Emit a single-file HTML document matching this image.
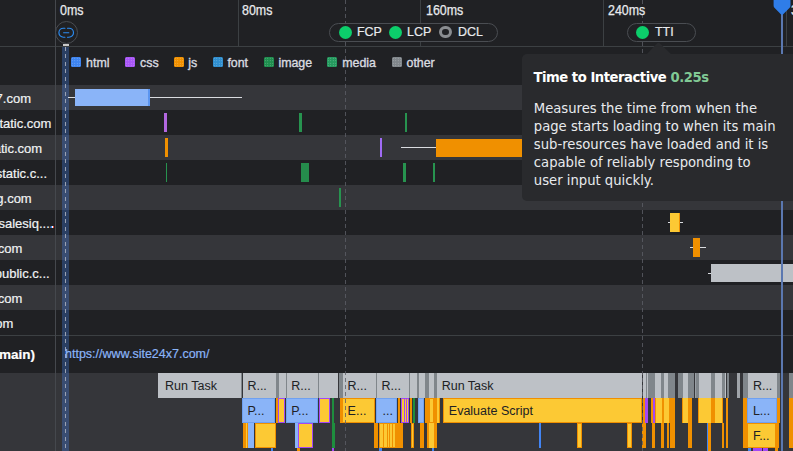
<!DOCTYPE html>
<html><head><meta charset="utf-8"><title>Waterfall</title>
<style>
html,body{margin:0;padding:0;background:#202124;}
body{width:793px;height:451px;position:relative;overflow:hidden;font-family:"Liberation Sans",sans-serif;font-size:12.5px;color:#e8eaed;}
.r{position:absolute;box-sizing:border-box;}
.t{position:absolute;white-space:nowrap;line-height:14px;z-index:4;}
.z3{z-index:3;}.z5{z-index:5;}
.lab{position:absolute;white-space:nowrap;line-height:14px;color:#f1f3f4;font-size:13px;-webkit-text-stroke:.2px currentColor;}
.ft{position:absolute;white-space:nowrap;line-height:14px;color:#202124;font-size:12.5px;}
.tall{font-size:13.8px;transform:scaleX(.9);transform-origin:0 0;line-height:16px;-webkit-text-stroke:.25px currentColor;}
.pl{font-size:13.4px;transform:scaleX(.93);transform-origin:0 0;line-height:16px;-webkit-text-stroke:.2px currentColor;}
.tip{font-family:"DejaVu Sans","Liberation Sans",sans-serif;}
</style></head><body>

<div class="r" style="left:0px;top:85px;width:793px;height:25px;background:#35363a;"></div>
<div class="r" style="left:0px;top:135px;width:793px;height:25px;background:#35363a;"></div>
<div class="r" style="left:0px;top:185px;width:793px;height:25px;background:#35363a;"></div>
<div class="r" style="left:0px;top:235px;width:793px;height:25px;background:#35363a;"></div>
<div class="r" style="left:0px;top:285px;width:793px;height:25px;background:#35363a;"></div>
<div class="r" style="left:0px;top:372.5px;width:793px;height:78.5px;background:#35363a;"></div>
<div class="r" style="left:0px;top:46px;width:793px;height:1px;background:#3c4043;"></div>
<div class="r" style="left:0px;top:335px;width:793px;height:1px;background:#3c4043;"></div>
<div class="r" style="left:238px;top:0px;width:1px;height:46px;background:#3c4043;"></div>
<div class="r" style="left:420px;top:0px;width:1px;height:46px;background:#3c4043;"></div>
<div class="r" style="left:603px;top:0px;width:1px;height:46px;background:#3c4043;"></div>
<div class="r" style="left:786px;top:0px;width:1px;height:46px;background:#3c4043;"></div>
<div class="r" style="left:55px;top:0px;width:1px;height:451px;background:#45484d;"></div>
<div class="t tall" style="left:60.2px;top:2.6px;color:#e8eaed">0ms</div>
<div class="t tall" style="left:242.4px;top:2.6px;color:#e8eaed">80ms</div>
<div class="t tall" style="left:425.7px;top:2.6px;color:#e8eaed">160ms</div>
<div class="t tall" style="left:607.6px;top:2.6px;color:#e8eaed">240ms</div>
<div class="t tall" style="left:791.3px;top:2.6px;color:#e8eaed">320ms</div>
<div class="r" style="left:344.5px;top:0;width:1px;height:451px;z-index:2;background:repeating-linear-gradient(to bottom,rgba(92,94,102,.8) 0,rgba(92,94,102,.8) 4px,transparent 4px,transparent 7px);"></div>
<div class="r" style="left:642px;top:0;width:1px;height:451px;z-index:2;background:repeating-linear-gradient(to bottom,rgba(92,94,102,.8) 0,rgba(92,94,102,.8) 4px,transparent 4px,transparent 7px);"></div>
<div class="r" style="left:62.2px;top:47px;width:6.7px;height:404px;background:rgba(66,133,244,.3);"></div>
<div class="r" style="left:65px;top:47px;width:1px;height:404px;background:repeating-linear-gradient(to bottom,#9aa1b1 0,#9aa1b1 4px,transparent 4px,transparent 7.5px);"></div>
<div class="r" style="left:62.5px;top:44px;width:6px;height:2px;background:#c8c8c8;"></div>
<div class="r" style="left:55px;top:20.5px;width:23px;height:23px;border-radius:50%;border:1px solid #4a4d52;background:#202124"></div>
<svg class="r" style="left:58px;top:26px" width="17" height="13" viewBox="58 26 17 13"><path d="M64.9 28.2H63.4a4.5 4.5 0 0 0 0 9h1.5M67.5 28.2h1.5a4.5 4.5 0 0 1 0 9h-1.5M63.6 32.7h5.2" fill="none" stroke="#2b8cf2" stroke-width="1.15" stroke-linecap="round"/></svg>
<div class="r z3" style="left:329px;top:22.5px;width:169px;height:19px;border-radius:10px;border:1px solid #4a4d52;background:#202124"></div>
<div class="r z3" style="left:626.5px;top:22.5px;width:69.5px;height:19px;border-radius:10px;border:1px solid #4a4d52;background:#202124"></div>
<div class="r z3" style="left:338.5px;top:25.700000000000003px;width:13px;height:13px;border-radius:50%;background:#0cce6b"></div>
<div class="r z3" style="left:388.5px;top:25.700000000000003px;width:13px;height:13px;border-radius:50%;background:#0cce6b"></div>
<div class="r z3" style="left:635.9px;top:25.700000000000003px;width:13px;height:13px;border-radius:50%;background:#0cce6b"></div>
<div class="r z3" style="left:439.1px;top:25.9px;width:12.6px;height:12.6px;border-radius:50%;border:3.1px solid #8a8d91;background:#202124"></div>
<div class="t pl" style="left:357.4px;top:24.2px;color:#e8eaed">FCP</div>
<div class="t pl" style="left:407.1px;top:24.2px;color:#e8eaed">LCP</div>
<div class="t pl" style="left:457.5px;top:24.2px;color:#e8eaed">DCL</div>
<div class="t pl" style="left:655.2px;top:24.2px;color:#e8eaed">TTI</div>
<div class="r" style="left:71.3px;top:57.4px;width:10px;height:10px;background:#3d84f0;border-radius:1.5px;background-image:radial-gradient(rgba(255,255,255,.35) .5px,transparent .7px);background-size:2.5px 2.5px;"></div>
<div class="t" style="left:86.1px;top:55.5px;color:#dadce0;font-size:12.4px;-webkit-text-stroke:.35px currentColor">html</div>
<div class="r" style="left:125.3px;top:57.4px;width:10px;height:10px;background:#a855f7;border-radius:1.5px;background-image:radial-gradient(rgba(255,255,255,.35) .5px,transparent .7px);background-size:2.5px 2.5px;"></div>
<div class="t" style="left:140.1px;top:55.5px;color:#dadce0;font-size:12.4px;-webkit-text-stroke:.35px currentColor">css</div>
<div class="r" style="left:173.5px;top:57.4px;width:10px;height:10px;background:#f09000;border-radius:1.5px;background-image:radial-gradient(rgba(255,255,255,.35) .5px,transparent .7px);background-size:2.5px 2.5px;"></div>
<div class="t" style="left:188.3px;top:55.5px;color:#dadce0;font-size:12.4px;-webkit-text-stroke:.35px currentColor">js</div>
<div class="r" style="left:212.6px;top:57.4px;width:10px;height:10px;background:#2f8fd0;border-radius:1.5px;background-image:radial-gradient(rgba(255,255,255,.35) .5px,transparent .7px);background-size:2.5px 2.5px;"></div>
<div class="t" style="left:227.4px;top:55.5px;color:#dadce0;font-size:12.4px;-webkit-text-stroke:.35px currentColor">font</div>
<div class="r" style="left:263.6px;top:57.4px;width:10px;height:10px;background:#1e8e4e;border-radius:1.5px;background-image:radial-gradient(rgba(255,255,255,.35) .5px,transparent .7px);background-size:2.5px 2.5px;"></div>
<div class="t" style="left:278.40000000000003px;top:55.5px;color:#dadce0;font-size:12.4px;-webkit-text-stroke:.35px currentColor">image</div>
<div class="r" style="left:327.4px;top:57.4px;width:10px;height:10px;background:#249a5e;border-radius:1.5px;background-image:radial-gradient(rgba(255,255,255,.35) .5px,transparent .7px);background-size:2.5px 2.5px;"></div>
<div class="t" style="left:342.2px;top:55.5px;color:#dadce0;font-size:12.4px;-webkit-text-stroke:.35px currentColor">media</div>
<div class="r" style="left:391.7px;top:57.4px;width:10px;height:10px;background:#80868b;border-radius:1.5px;background-image:radial-gradient(rgba(255,255,255,.35) .5px,transparent .7px);background-size:2.5px 2.5px;"></div>
<div class="t" style="left:406.5px;top:55.5px;color:#dadce0;font-size:12.4px;-webkit-text-stroke:.35px currentColor">other</div>
<div class="lab" style="right:762px;top:91.8px">site24x7.com</div>
<div class="lab" style="right:741.6px;top:116.8px">cdn.sitestatic.com</div>
<div class="lab" style="right:750.9px;top:141.8px">js.sitestatic.com</div>
<div class="lab" style="right:746px;top:166.8px">img.sitestatic.c...</div>
<div class="lab" style="right:761.3px;top:191.8px">zohopublic.sg.com</div>
<div class="lab" style="right:739.6px;top:216.8px">us4-files.salesiq....</div>
<div class="lab" style="right:770.6px;top:241.8px">zoho.com</div>
<div class="lab" style="right:743.3px;top:266.8px">salesiq.zohopublic.c...</div>
<div class="lab" style="right:770.6px;top:291.8px">zoho.com</div>
<div class="lab" style="right:779.6px;top:316.8px">site.com</div>
<div class="lab" style="right:758px;top:347.5px;font-weight:bold;color:#fff;font-size:13.5px">Main Thread (main)</div>
<div class="t" style="left:65px;top:346.7px;color:#8ab4f8;font-size:12.5px;-webkit-text-stroke:.2px currentColor">https://www.site24x7.com/</div>
<div class="r" style="left:67.5px;top:97px;width:174px;height:1px;background:#dadce0;"></div>
<div class="r" style="left:75px;top:89px;width:75.3px;height:17px;background:#8ab4f8;"></div>
<div class="r" style="left:148.3px;top:89px;width:2px;height:17px;background:#5b95f0;"></div>
<div class="r" style="left:164px;top:113px;width:3px;height:19px;background:#b267e0;"></div>
<div class="r" style="left:299.3px;top:113px;width:2.7px;height:19px;background:#27934f;"></div>
<div class="r" style="left:404.7px;top:113px;width:2.3px;height:19px;background:#27934f;"></div>
<div class="r" style="left:165px;top:138px;width:3px;height:19px;background:#f09000;"></div>
<div class="r" style="left:380px;top:138px;width:2px;height:19px;background:#a06bf5;"></div>
<div class="r" style="left:401px;top:147px;width:35px;height:1px;background:#dadce0;"></div>
<div class="r" style="left:436px;top:138.5px;width:94px;height:18px;background:#f09000;"></div>
<div class="r" style="left:165.7px;top:163px;width:1.5px;height:19px;background:#27934f;"></div>
<div class="r" style="left:300.8px;top:163px;width:8.4px;height:19px;background:#258c4c;"></div>
<div class="r" style="left:403.2px;top:163px;width:2.4px;height:19px;background:#27934f;"></div>
<div class="r" style="left:433px;top:163px;width:2px;height:19px;background:#27934f;"></div>
<div class="r" style="left:339.2px;top:188px;width:1.8px;height:19px;background:#27934f;"></div>
<div class="r" style="left:667.5px;top:222px;width:15.5px;height:1px;background:#dadce0;"></div>
<div class="r" style="left:670px;top:213px;width:10.2px;height:19px;background:#fcc934;"></div>
<div class="r" style="left:678.7px;top:213px;width:1.5px;height:19px;background:#f09000;"></div>
<div class="r" style="left:51px;top:226px;width:1px;height:2px;background:#4a8af0;"></div>
<div class="r" style="left:52px;top:226px;width:1px;height:2px;background:#fff;"></div>
<div class="r" style="left:53px;top:226px;width:1px;height:2px;background:#e04030;"></div>
<div class="r" style="left:689.6px;top:247px;width:16px;height:1px;background:#dadce0;"></div>
<div class="r" style="left:693px;top:238px;width:6.6px;height:19px;background:#f09000;"></div>
<div class="r" style="left:708px;top:272.5px;width:4px;height:1px;background:#dadce0;"></div>
<div class="r" style="left:711px;top:263.5px;width:82px;height:18.5px;background:#bdc1c6;"></div>
<!-- FLAME -->
<div class="r" style="left:158.2px;top:373px;width:82.4px;height:24.7px;background:#bdc1c6;"></div>
<div class="r" style="left:240.6px;top:373px;width:1.9px;height:24.7px;background:#80868b;"></div>
<div class="r" style="left:242.5px;top:373px;width:33px;height:24.7px;background:#bdc1c6;"></div>
<div class="r" style="left:275.5px;top:373px;width:3px;height:24.7px;background:#80868b;"></div>
<div class="r" style="left:278.5px;top:373px;width:7px;height:24.7px;background:#bdc1c6;"></div>
<div class="r" style="left:285.5px;top:373px;width:1px;height:24.7px;background:#80868b;"></div>
<div class="r" style="left:286.5px;top:373px;width:31.3px;height:24.7px;background:#bdc1c6;"></div>
<div class="r" style="left:317.8px;top:373px;width:0.7px;height:24.7px;background:#80868b;"></div>
<div class="r" style="left:318.5px;top:373px;width:16px;height:24.7px;background:#bdc1c6;"></div>
<div class="r" style="left:334.5px;top:373px;width:0.5px;height:24.7px;background:#80868b;"></div>
<div class="r" style="left:335px;top:373px;width:3px;height:24.7px;background:#bdc1c6;"></div>
<div class="r" style="left:339px;top:373px;width:4px;height:24.7px;background:#80868b;"></div>
<div class="r" style="left:343px;top:373px;width:32.8px;height:24.7px;background:#bdc1c6;"></div>
<div class="r" style="left:375.8px;top:373px;width:0.7px;height:24.7px;background:#80868b;"></div>
<div class="r" style="left:376.5px;top:373px;width:32.8px;height:24.7px;background:#bdc1c6;"></div>
<div class="r" style="left:409.3px;top:373px;width:1px;height:24.7px;background:#80868b;"></div>
<div class="r" style="left:410.3px;top:373px;width:7px;height:24.7px;background:#bdc1c6;"></div>
<div class="r" style="left:417.3px;top:373px;width:1.7px;height:24.7px;background:#80868b;"></div>
<div class="r" style="left:419px;top:373px;width:6px;height:24.7px;background:#bdc1c6;"></div>
<div class="r" style="left:425px;top:373px;width:3.7px;height:24.7px;background:#80868b;"></div>
<div class="r" style="left:428.7px;top:373px;width:5.1px;height:24.7px;background:#bdc1c6;"></div>
<div class="r" style="left:433.8px;top:373px;width:3.2px;height:24.7px;background:#80868b;"></div>
<div class="r" style="left:437px;top:373px;width:205.3px;height:24.7px;background:#bdc1c6;"></div>
<div class="r" style="left:643.4px;top:373px;width:4.9px;height:24.7px;background:#bdc1c6;"></div>
<div class="r" style="left:646px;top:373px;width:0.8px;height:24.7px;background:#80868b;"></div>
<div class="r" style="left:648.3px;top:373px;width:7px;height:24.7px;background:#80868b;"></div>
<div class="r" style="left:655.3px;top:373px;width:5.7px;height:24.7px;background:#bdc1c6;"></div>
<div class="r" style="left:661px;top:373px;width:2.7px;height:24.7px;background:#80868b;"></div>
<div class="r" style="left:663.7px;top:373px;width:4.5px;height:24.7px;background:#bdc1c6;"></div>
<div class="r" style="left:668.2px;top:373px;width:6.6px;height:24.7px;background:#80868b;"></div>
<div class="r" style="left:678.2px;top:373px;width:4.6px;height:24.7px;background:#80868b;"></div>
<div class="r" style="left:682.8px;top:373px;width:5.5px;height:24.7px;background:#bdc1c6;"></div>
<div class="r" style="left:688.3px;top:373px;width:6.2px;height:24.7px;background:#80868b;"></div>
<div class="r" style="left:694.5px;top:373px;width:1.8px;height:24.7px;background:#9aa0a6;"></div>
<div class="r" style="left:696.3px;top:373px;width:2.4px;height:24.7px;background:#80868b;"></div>
<div class="r" style="left:698.7px;top:373px;width:12px;height:24.7px;background:#bdc1c6;"></div>
<div class="r" style="left:710.7px;top:373px;width:4.6px;height:24.7px;background:#80868b;"></div>
<div class="r" style="left:715.3px;top:373px;width:6.5px;height:24.7px;background:#bdc1c6;"></div>
<div class="r" style="left:721.8px;top:373px;width:3.5px;height:24.7px;background:#80868b;"></div>
<div class="r" style="left:725.3px;top:373px;width:1.2px;height:24.7px;background:#bdc1c6;"></div>
<div class="r" style="left:726.5px;top:373px;width:2.6px;height:24.7px;background:#80868b;"></div>
<div class="r" style="left:737px;top:373px;width:2.7px;height:24.7px;background:#a0a4a9;"></div>
<div class="r" style="left:743px;top:373px;width:4.7px;height:24.7px;background:#80868b;"></div>
<div class="r" style="left:747.7px;top:373px;width:29.7px;height:24.7px;background:#bdc1c6;"></div>
<div class="r" style="left:777.4px;top:373px;width:2.6px;height:24.7px;background:#80868b;"></div>
<div class="r" style="left:789.3px;top:373px;width:3.7px;height:24.7px;background:#80868b;"></div>
<div class="r" style="left:242.3px;top:397.7px;width:33.2px;height:25px;background:#8ab4f8;border:1px solid #6fa0f0;"></div>
<div class="r" style="left:276px;top:397.7px;width:2px;height:25px;background:#f09000;"></div>
<div class="r" style="left:278.3px;top:397.7px;width:6.5px;height:25px;background:#fcc934;border:1px solid #a347f5;"></div>
<div class="r" style="left:286.2px;top:397.7px;width:31.4px;height:25px;background:#8ab4f8;border:1px solid #6fa0f0;"></div>
<div class="r" style="left:318.6px;top:397.7px;width:11.4px;height:25px;background:#fcc934;border:1px solid #a347f5;"></div>
<div class="r" style="left:331.7px;top:397.7px;width:2.3px;height:25px;background:#1e8e3e;"></div>
<div class="r" style="left:340.4px;top:397.7px;width:35.1px;height:25px;background:#fcc934;border:1px solid #f09000;"></div>
<div class="r" style="left:340.4px;top:397.7px;width:2.9px;height:25px;background:#f09000;"></div>
<div class="r" style="left:376.3px;top:397.7px;width:20.7px;height:25px;background:#8ab4f8;border:1px solid #6fa0f0;"></div>
<div class="r" style="left:397.5px;top:397.7px;width:2.9px;height:25px;background:#fcc934;border:1px solid #f09000;"></div>
<div class="r" style="left:400.8px;top:397.7px;width:8.2px;height:25px;background:#fcc934;border:1px solid #a347f5;"></div>
<div class="r" style="left:410.3px;top:397.7px;width:1.8px;height:25px;background:#f09000;"></div>
<div class="r" style="left:413px;top:397.7px;width:2px;height:25px;background:#1e8e3e;"></div>
<div class="r" style="left:418px;top:397.7px;width:6.1px;height:25px;background:#8ab4f8;border:1px solid #6fa0f0;"></div>
<div class="r" style="left:425.4px;top:397.7px;width:3.3px;height:25px;background:#f09000;"></div>
<div class="r" style="left:428.7px;top:397.7px;width:5.5px;height:25px;background:#fcc934;border:1px solid #f09000;"></div>
<div class="r" style="left:434.2px;top:397.7px;width:2.8px;height:25px;background:#f09000;"></div>
<div class="r" style="left:437px;top:397.7px;width:1.6px;height:25px;background:#fcc934;"></div>
<div class="r" style="left:438.6px;top:397.7px;width:1.2px;height:25px;background:#f09000;"></div>
<div class="r" style="left:443px;top:397.7px;width:199.3px;height:25px;background:#fcc934;border:1px solid #f09000;"></div>
<div class="r" style="left:643.4px;top:397.7px;width:1.4px;height:25px;background:#f09000;"></div>
<div class="r" style="left:645.4px;top:397.7px;width:2.9px;height:25px;background:#a347f5;"></div>
<div class="r" style="left:650.6px;top:397.7px;width:2.3px;height:25px;background:#f09000;"></div>
<div class="r" style="left:652.9px;top:397.7px;width:2.5px;height:25px;background:#a347f5;"></div>
<div class="r" style="left:655.4px;top:397.7px;width:6.4px;height:25px;background:#fcc934;"></div>
<div class="r" style="left:655.4px;top:397.7px;width:1px;height:25px;background:#f09000;"></div>
<div class="r" style="left:661.8px;top:397.7px;width:2.2px;height:25px;background:#f09000;"></div>
<div class="r" style="left:664px;top:397.7px;width:4.8px;height:25px;background:#fcc934;"></div>
<div class="r" style="left:668.8px;top:397.7px;width:6.2px;height:25px;background:#f09000;"></div>
<div class="r" style="left:681.7px;top:397.7px;width:6.5px;height:25px;background:#fcc934;"></div>
<div class="r" style="left:681.7px;top:397.7px;width:1px;height:25px;background:#f09000;"></div>
<div class="r" style="left:688.2px;top:397.7px;width:3.8px;height:25px;background:#f09000;"></div>
<div class="r" style="left:697.9px;top:397.7px;width:13.2px;height:25px;background:#fcc934;"></div>
<div class="r" style="left:697.9px;top:397.7px;width:1px;height:25px;background:#f09000;"></div>
<div class="r" style="left:711.1px;top:397.7px;width:3.5px;height:25px;background:#f09000;"></div>
<div class="r" style="left:714.6px;top:397.7px;width:7px;height:25px;background:#fcc934;"></div>
<div class="r" style="left:721.6px;top:397.7px;width:1.7px;height:25px;background:#f09000;"></div>
<div class="r" style="left:725.5px;top:397.7px;width:2.6px;height:25px;background:#f09000;"></div>
<div class="r" style="left:743px;top:397.7px;width:4px;height:25px;background:#f09000;"></div>
<div class="r" style="left:747px;top:397.7px;width:30.4px;height:25px;background:#8ab4f8;border:1px solid #6fa0f0;"></div>
<div class="r" style="left:777.4px;top:397.7px;width:2.6px;height:25px;background:#f09000;"></div>
<div class="r" style="left:789.3px;top:397.7px;width:3.7px;height:25px;background:#f09000;"></div>
<div class="r" style="left:403.5px;top:399px;width:0.8px;height:22.5px;background:#a347f5;"></div>
<div class="r" style="left:405.5px;top:399px;width:0.8px;height:22.5px;background:#a347f5;"></div>
<div class="r" style="left:243.3px;top:422.7px;width:4.7px;height:25.3px;background:#f09000;"></div>
<div class="r" style="left:245.5px;top:422.7px;width:0.8px;height:25.3px;background:#fcc934;"></div>
<div class="r" style="left:248.4px;top:422.7px;width:5.2px;height:25.3px;background:#8ab4f8;"></div>
<div class="r" style="left:254.5px;top:422.7px;width:21.2px;height:25.3px;background:#fcc934;border:1px solid #f09000;"></div>
<div class="r" style="left:294.5px;top:422.7px;width:3.3px;height:25.3px;background:#8ab4f8;"></div>
<div class="r" style="left:298.1px;top:422.7px;width:14.8px;height:25.3px;background:#fcc934;border:1px solid #a347f5;"></div>
<div class="r" style="left:331.5px;top:422.7px;width:3px;height:25.3px;background:#1e8e3e;"></div>
<div class="r" style="left:374.1px;top:422.7px;width:4px;height:25.3px;background:#f09000;"></div>
<div class="r" style="left:379.1px;top:422.7px;width:16.5px;height:25.3px;background:#fcc934;border:1px solid #f09000;"></div>
<div class="r" style="left:395.6px;top:422.7px;width:7.4px;height:25.3px;background:#f09000;"></div>
<div class="r" style="left:410.6px;top:422.7px;width:3.7px;height:25.3px;background:#fcc934;border:1px solid #f09000;"></div>
<div class="r" style="left:420.4px;top:422.7px;width:4px;height:25.3px;background:#f09000;"></div>
<div class="r" style="left:426.8px;top:422.7px;width:2.2px;height:25.3px;background:#f09000;"></div>
<div class="r" style="left:429px;top:422.7px;width:5.2px;height:25.3px;background:#fcc934;"></div>
<div class="r" style="left:434.2px;top:422.7px;width:2.8px;height:25.3px;background:#f09000;"></div>
<div class="r" style="left:538.5px;top:422.7px;width:2.5px;height:25.3px;background:#4285f4;"></div>
<div class="r" style="left:577px;top:422.7px;width:5px;height:25.3px;background:#fcc934;border:1px solid #f09000;"></div>
<div class="r" style="left:627.1px;top:422.7px;width:4.7px;height:25.3px;background:#fcc934;border:1px solid #f09000;"></div>
<div class="r" style="left:642.3px;top:422.7px;width:3.3px;height:25.3px;background:#f09000;"></div>
<div class="r" style="left:651.8px;top:422.7px;width:2.8px;height:25.3px;background:#f09000;"></div>
<div class="r" style="left:660.7px;top:422.7px;width:3.6px;height:25.3px;background:#f09000;"></div>
<div class="r" style="left:666.6px;top:422.7px;width:2.7px;height:25.3px;background:#f09000;"></div>
<div class="r" style="left:670.1px;top:422.7px;width:4.5px;height:25.3px;background:#f09000;"></div>
<div class="r" style="left:688.2px;top:422.7px;width:3.5px;height:25.3px;background:#f09000;"></div>
<div class="r" style="left:721.5px;top:422.7px;width:2px;height:25.3px;background:#f09000;"></div>
<div class="r" style="left:725.6px;top:422.7px;width:2.5px;height:25.3px;background:#f09000;"></div>
<div class="r" style="left:743px;top:422.7px;width:4px;height:25.3px;background:#f09000;"></div>
<div class="r" style="left:747px;top:422.7px;width:29px;height:25.3px;background:#fcc934;border:1px solid #f09000;"></div>
<div class="r" style="left:776px;top:422.7px;width:3.4px;height:25.3px;background:#f09000;"></div>
<div class="r" style="left:789.3px;top:422.7px;width:3.7px;height:25.3px;background:#f09000;"></div>
<div class="r" style="left:383px;top:424px;width:0.8px;height:23px;background:#f09000;"></div>
<div class="r" style="left:386.5px;top:424px;width:0.8px;height:23px;background:#f09000;"></div>
<div class="r" style="left:389px;top:424px;width:0.8px;height:23px;background:#f09000;"></div>
<div class="r" style="left:392px;top:424px;width:0.8px;height:23px;background:#f09000;"></div>
<div class="r" style="left:706.9px;top:422.7px;width:0.9px;height:28.3px;background:#4285f4;"></div>
<div class="r" style="left:707.8px;top:422.7px;width:3.3px;height:28.3px;background:#f09000;"></div>
<div class="r" style="left:270.9px;top:448px;width:2.1px;height:3px;background:#4285f4;"></div>
<div class="r" style="left:296.7px;top:448px;width:2.9px;height:3px;background:#f09000;"></div>
<div class="r" style="left:332px;top:448px;width:2px;height:3px;background:#a347f5;"></div>
<div class="r" style="left:379px;top:448px;width:2.8px;height:3px;background:#4285f4;"></div>
<div class="r" style="left:432px;top:448px;width:2.2px;height:3px;background:#4285f4;"></div>
<div class="r" style="left:748px;top:448px;width:2.7px;height:3px;background:#4285f4;"></div>
<div class="r" style="left:753px;top:448px;width:8.7px;height:3px;background:#a347f5;"></div>
<div class="r" style="left:763px;top:448px;width:4.8px;height:3px;background:#a347f5;"></div>
<div class="r" style="left:774.6px;top:448px;width:3.7px;height:3px;background:#f09000;"></div>
<div class="ft" style="left:165.0px;top:379px">Run Task</div>
<div class="ft" style="left:247.4px;top:379px">R...</div>
<div class="ft" style="left:291.3px;top:379px">R...</div>
<div class="ft" style="left:347.6px;top:379px">R...</div>
<div class="ft" style="left:381.6px;top:379px">R...</div>
<div class="ft" style="left:441.7px;top:379px">Run Task</div>
<div class="ft" style="left:752.9px;top:379px">R...</div>
<div class="ft" style="left:247.4px;top:403.7px">P...</div>
<div class="ft" style="left:291.3px;top:403.7px">P...</div>
<div class="ft" style="left:347.6px;top:403.7px">E...</div>
<div class="ft" style="left:382.5px;top:403.7px">...</div>
<div class="ft" style="left:448.8px;top:403.7px">Evaluate Script</div>
<div class="ft" style="left:752.9px;top:403.7px">L...</div>
<div class="ft" style="left:752.9px;top:428.7px">F...</div>
<div class="r" style="left:780.8px;top:10px;width:2.2px;height:441px;background:#5b78b0;"></div>
<svg class="r" style="left:773px;top:0" width="19" height="16" viewBox="0 0 19 16"><path d="M0.6 0H17.5V5.5Q17.5 7 16.4 8L9.9 14.6Q9 15.4 8.1 14.6L1.7 8Q0.6 7 0.6 5.5Z" fill="#2f7de8"/></svg>
<svg class="r z5" style="left:646.2px;top:42px" width="26" height="13" viewBox="0 0 26 12" preserveAspectRatio="none"><path d="M0 12L11 1.2Q12.4 0 13.8 1.2L26 12Z" fill="#292a2d"/></svg>
<div class="r tip z5" style="left:522.2px;top:54px;width:300px;height:147px;background:#292a2d;border-radius:5px;"></div>
<div class="t tip z5" style="left:533.4px;top:69px;line-height:18px;font-size:13.2px;letter-spacing:-.47px;font-weight:bold;color:#fff">Time to Interactive <span style="color:#81c995">0.25s</span></div>
<div class="t tip z5" style="left:533.8px;top:100.1px;line-height:18px;font-size:13.2px;color:#e8eaed">Measures the time from when the<br>page starts loading to when its main<br>sub-resources have loaded and it is<br>capable of reliably responding to<br>user input quickly.</div>
</body></html>
